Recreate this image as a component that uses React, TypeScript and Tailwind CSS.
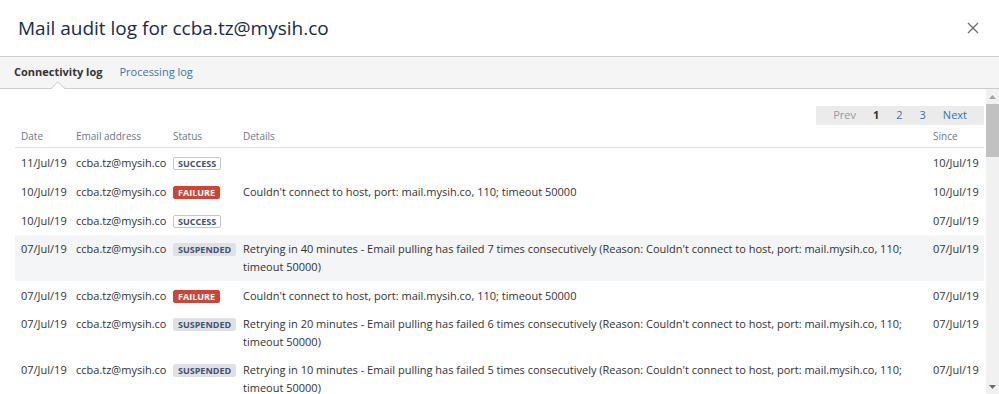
import React from "react";

type Status = "success" | "failure" | "suspended";

const rows: { date: string; status: Status; details: string; since: string }[] = [
  { date: "11/Jul/19", status: "success", details: "", since: "10/Jul/19" },
  { date: "10/Jul/19", status: "failure", details: "Couldn't connect to host, port: mail.mysih.co, 110; timeout 50000", since: "10/Jul/19" },
  { date: "10/Jul/19", status: "success", details: "", since: "07/Jul/19" },
  {
    date: "07/Jul/19",
    status: "suspended",
    details:
      "Retrying in 40 minutes - Email pulling has failed 7 times consecutively (Reason: Couldn't connect to host, port: mail.mysih.co, 110; timeout 50000)",
    since: "07/Jul/19",
  },
  { date: "07/Jul/19", status: "failure", details: "Couldn't connect to host, port: mail.mysih.co, 110; timeout 50000", since: "07/Jul/19" },
  {
    date: "07/Jul/19",
    status: "suspended",
    details:
      "Retrying in 20 minutes - Email pulling has failed 6 times consecutively (Reason: Couldn't connect to host, port: mail.mysih.co, 110; timeout 50000)",
    since: "07/Jul/19",
  },
  {
    date: "07/Jul/19",
    status: "suspended",
    details:
      "Retrying in 10 minutes - Email pulling has failed 5 times consecutively (Reason: Couldn't connect to host, port: mail.mysih.co, 110; timeout 50000)",
    since: "07/Jul/19",
  },
];

function Badge({ status }: { status: Status }) {
  if (status === "success") {
    return (
      <span className="inline-block border border-[#c1c7d0] bg-white px-[4px] text-[9px] font-bold leading-[11px] text-[#42526e] rounded-[2px]">
        SUCCESS
      </span>
    );
  }
  if (status === "failure") {
    return (
      <span className="inline-block border border-[#d04437] bg-[#d04437] px-[4px] text-[9px] font-bold leading-[11px] text-white rounded-[2px]">
        FAILURE
      </span>
    );
  }
  return (
    <span className="inline-block border border-[#dfe1e6] bg-[#dfe1e6] px-[4px] text-[9px] font-bold leading-[11px] text-[#42526e] rounded-[2px]">
      SUSPENDED
    </span>
  );
}

export default function App() {
  return (
    <div
      className="w-[999px] h-[394px] overflow-hidden bg-white text-[#333] flex flex-col"
      style={{ fontFamily: '"Open Sans", "Noto Sans", sans-serif' }}
    >
      {/* header */}
      <div className="h-[56px] flex items-center justify-between pl-[18px] pr-[20px] shrink-0">
        <h1 className="text-[19px] leading-[24px] text-[#172b4d] font-normal">Mail audit log for ccba.tz@mysih.co</h1>
        <svg width="12" height="12" viewBox="0 0 12 12" className="text-[#6b6b6b]">
          <path d="M1 1 L11 11 M11 1 L1 11" stroke="currentColor" strokeWidth="1.3" fill="none" />
        </svg>
      </div>

      {/* tabs */}
      <div className="relative h-[33px] shrink-0 border-y border-[#cccccc] bg-[#f5f5f5] flex items-center pl-[14px] gap-[17px] text-[11px]">
        <span className="font-bold text-[#333]">Connectivity log</span>
        <span className="text-[#3b73af]">Processing log</span>
        <svg width="14" height="8" viewBox="0 0 14 8" className="absolute left-[51px] -bottom-[1px]">
          <path d="M0 8 L7 1 L14 8 Z" fill="#ffffff" />
          <path d="M0 7.5 L7 0.8 L14 7.5" stroke="#cccccc" strokeWidth="1" fill="none" />
        </svg>
      </div>

      {/* content */}
      <div className="flex-1 flex min-h-0">
        <div className="flex-1 min-w-0 pl-[15px] pr-[2px] overflow-hidden">
          <div className="flex justify-end mt-[17px]">
            <div className="flex items-center h-[19px] bg-[#ebebeb] pl-[17px] pr-[17px] gap-[17px] text-[11px]">
              <span className="text-[#999]">Prev</span>
              <span className="font-bold text-[#333]">1</span>
              <span className="text-[#3572b0]">2</span>
              <span className="text-[#3572b0]">3</span>
              <span className="text-[#3572b0]">Next</span>
            </div>
          </div>

          <table className="w-full table-fixed border-collapse text-[11px]">
            <colgroup>
              <col className="w-[55px]" />
              <col className="w-[97px]" />
              <col className="w-[70px]" />
              <col />
              <col className="w-[57px]" />
            </colgroup>
            <thead>
              <tr className="h-[22px] border-b border-[#dfe1e6] text-[10px] text-[#6b778c]">
                <th className="text-left font-normal pl-[6px] pt-[1px]">Date</th>
                <th className="text-left font-normal pl-[6px] pt-[1px]">Email address</th>
                <th className="text-left font-normal pl-[6px] pt-[1px]">Status</th>
                <th className="text-left font-normal pl-[6px] pt-[1px]">Details</th>
                <th className="text-left font-normal pl-[6px] pt-[1px]">Since</th>
              </tr>
            </thead>
            <tbody>
              {rows.map((r, i) => {
                const pad = r.details.length > 80 ? "pt-[5px] pb-[5px]" : "pt-[6px] pb-[5px]";
                return (
                  <tr key={i} className={i === 3 ? "bg-[#f4f5f7]" : ""}>
                    <td className={`align-top pl-[6px] leading-[18px] whitespace-nowrap ${pad}`}>{r.date}</td>
                    <td className={`align-top pl-[6px] leading-[18px] whitespace-nowrap ${pad}`}>ccba.tz@mysih.co</td>
                    <td className={`align-top pl-[6px] leading-[18px] ${pad}`}>
                      <Badge status={r.status} />
                    </td>
                    <td className={`align-top pl-[6px] leading-[18px] ${pad}`}>{r.details}</td>
                    <td className={`align-top pl-[6px] leading-[18px] whitespace-nowrap ${pad}`}>{r.since}</td>
                  </tr>
                );
              })}
            </tbody>
          </table>
        </div>

        {/* scrollbar */}
        <div className="w-[13px] shrink-0 bg-[#f1f1f1] flex flex-col items-center">
          <div className="h-[15px] flex items-center justify-center">
            <svg width="7" height="4" viewBox="0 0 7 4">
              <path d="M0 4 L3.5 0 L7 4 Z" fill="#a3a3a3" />
            </svg>
          </div>
          <div className="w-full h-[53px] bg-[#c1c1c1]" />
          <div className="flex-1" />
          <div className="h-[14px] flex items-center justify-center">
            <svg width="7" height="4" viewBox="0 0 7 4">
              <path d="M0 0 L3.5 4 L7 0 Z" fill="#6b6b6b" />
            </svg>
          </div>
        </div>
      </div>
    </div>
  );
}
